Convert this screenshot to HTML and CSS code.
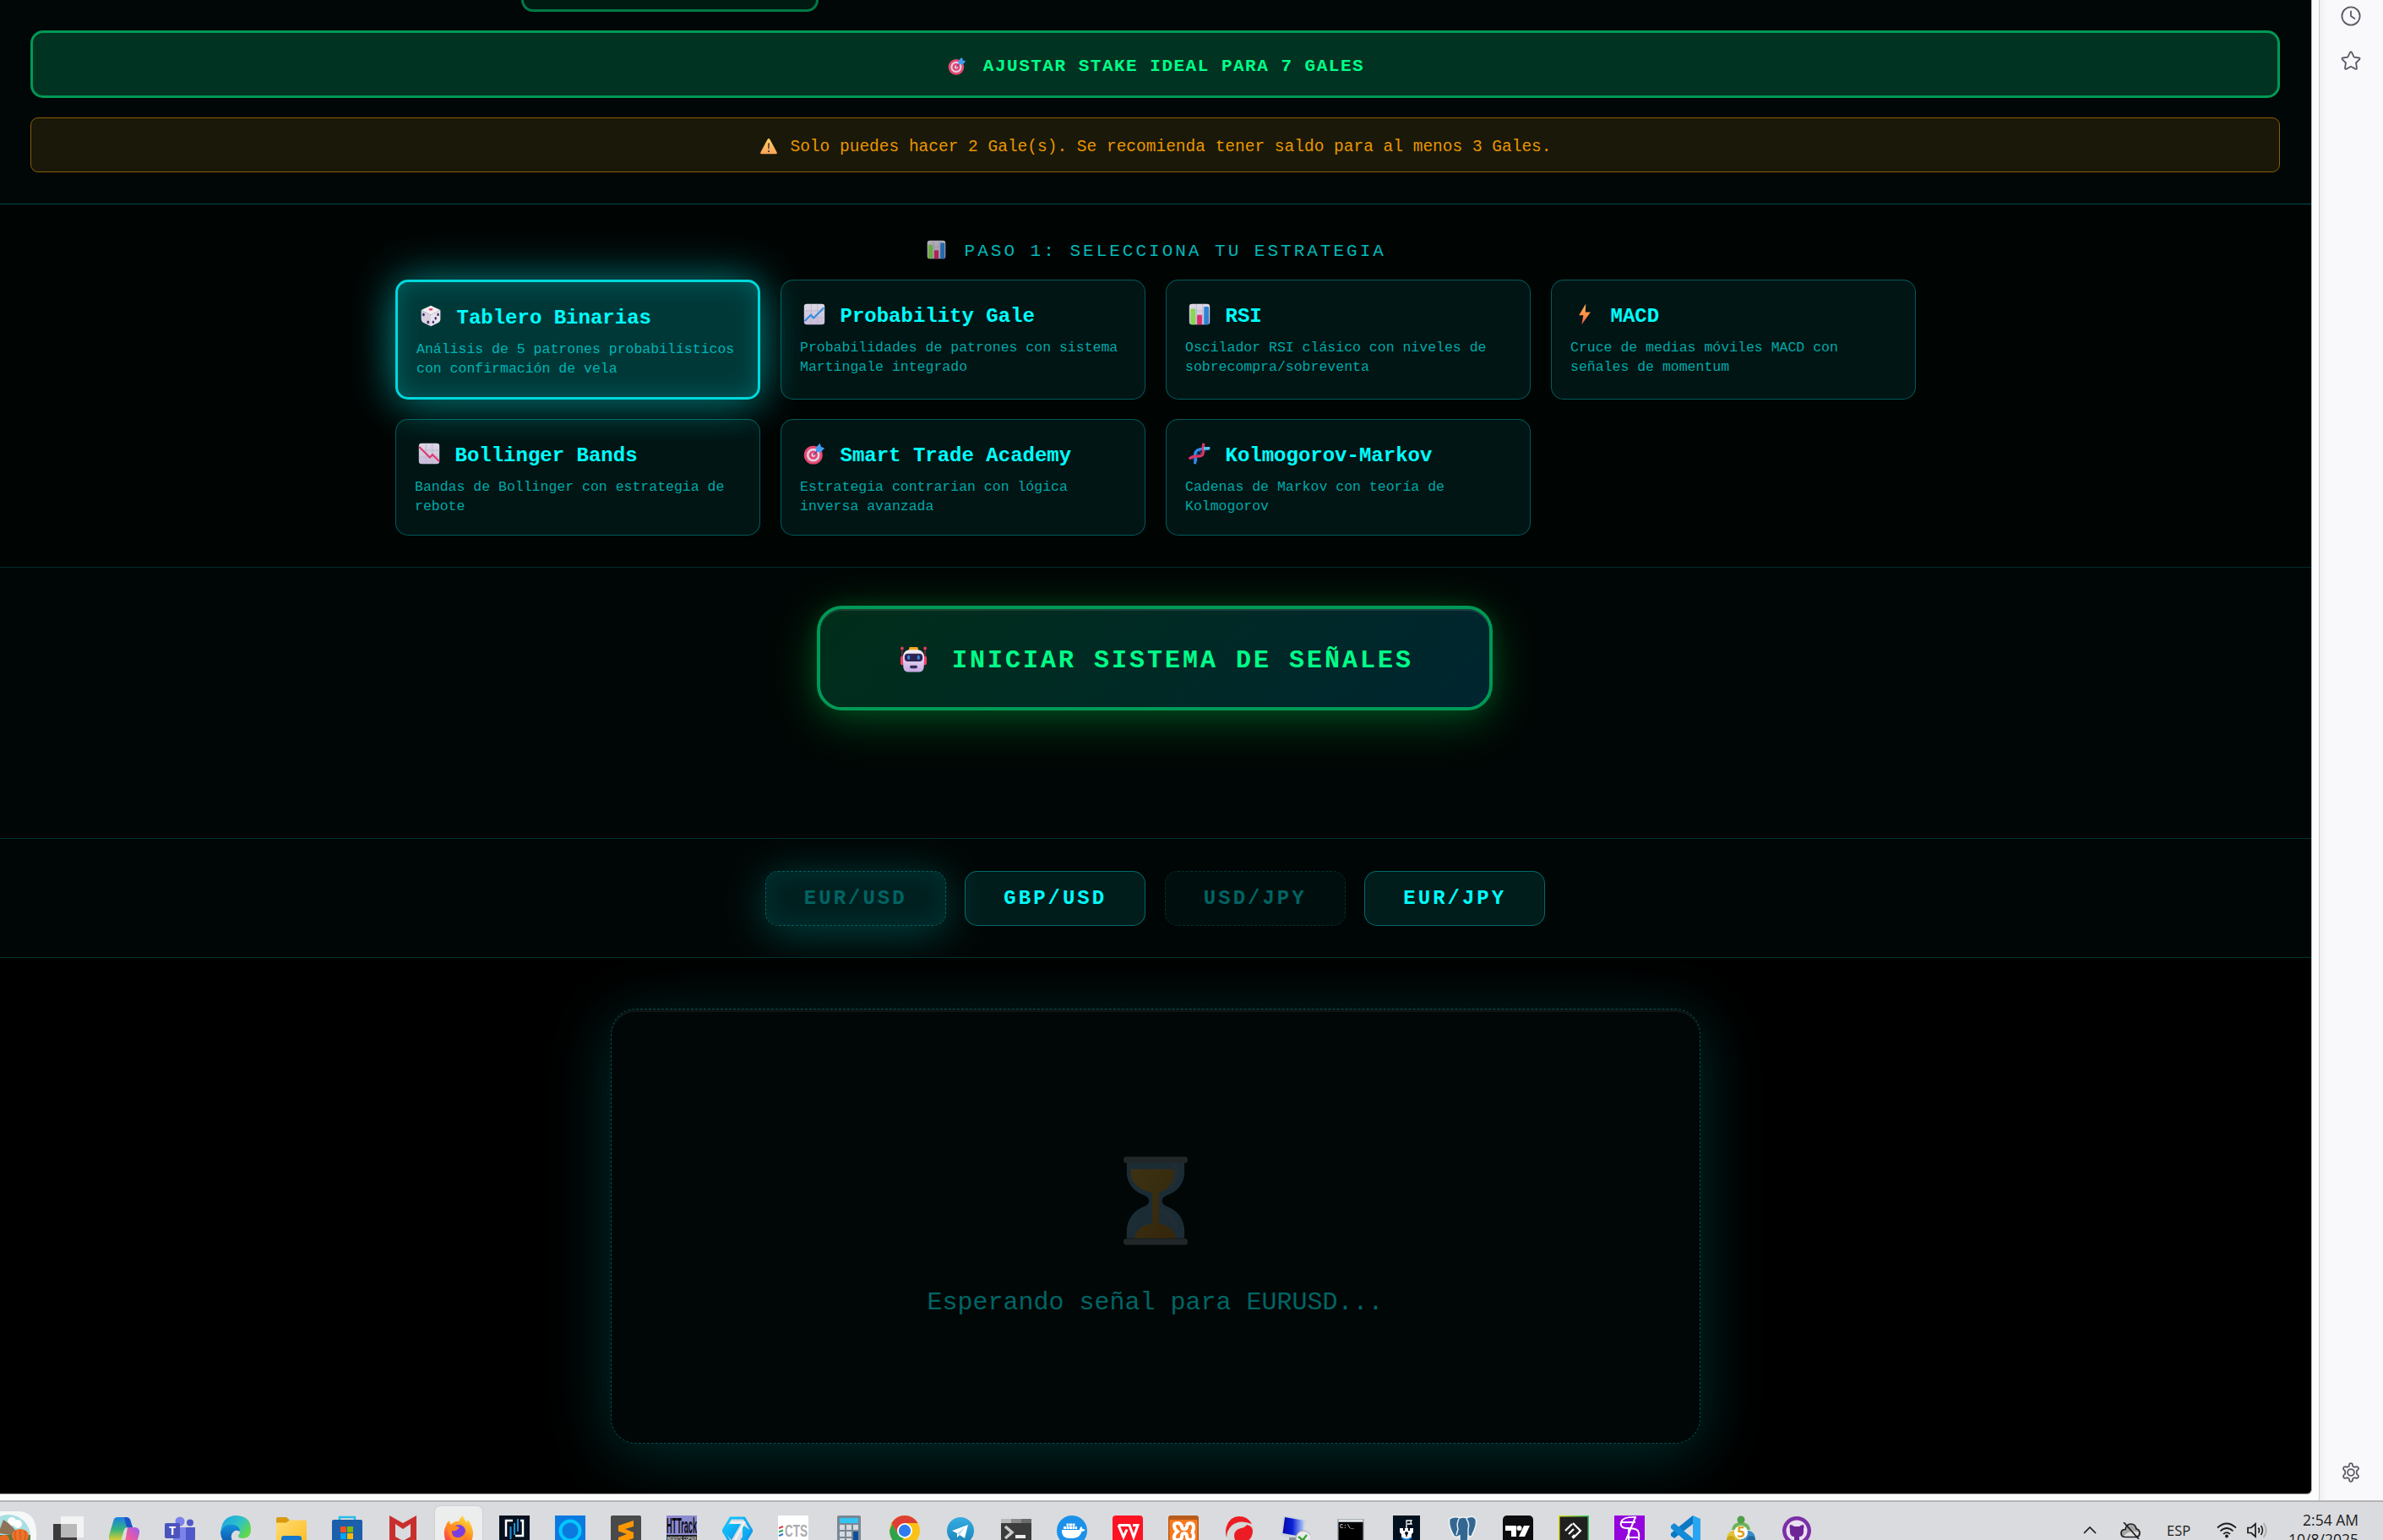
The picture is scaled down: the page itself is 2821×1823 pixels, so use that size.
FILE: index.html
```html
<!DOCTYPE html>
<html lang="es">
<head>
<meta charset="utf-8">
<title>Sistema de Señales</title>
<link rel="stylesheet" href="styles.css">
</head>
<body>
<svg class="defs" aria-hidden="true">
  <defs>
    <linearGradient id="paper" x1="0" y1="0" x2="0" y2="1"><stop offset="0" stop-color="#dcd8e4"/><stop offset="1" stop-color="#c9bddb"/></linearGradient>
    <linearGradient id="bolt" x1="0" y1="0" x2="0" y2="1"><stop offset="0" stop-color="#fcb54a"/><stop offset=".6" stop-color="#ff8a45"/><stop offset="1" stop-color="#f0504a"/></linearGradient>
    <linearGradient id="warn" x1="0" y1="0" x2="0" y2="1"><stop offset="0" stop-color="#ffd058"/><stop offset="1" stop-color="#ffa45c"/></linearGradient>
    <linearGradient id="bot" x1="0" y1="0" x2="0" y2="1"><stop offset="0" stop-color="#f4f0f8"/><stop offset="1" stop-color="#c6a9e4"/></linearGradient>
    <linearGradient id="copA" x1="0" y1="0" x2="0" y2="1"><stop offset="0" stop-color="#1b7fe8"/><stop offset=".5" stop-color="#37b37a"/><stop offset="1" stop-color="#f5d327"/></linearGradient>
    <linearGradient id="copB" x1="1" y1="0" x2="0" y2="1"><stop offset="0" stop-color="#9a5cf5"/><stop offset=".5" stop-color="#ee5b9c"/><stop offset="1" stop-color="#ff9a4a"/></linearGradient>
    <linearGradient id="edgeA" x1="0" y1="0" x2="1" y2=".6"><stop offset="0" stop-color="#1aa0e6"/><stop offset=".6" stop-color="#2fc2c6"/><stop offset="1" stop-color="#62d84a"/></linearGradient>
    <linearGradient id="edgeB" x1="0" y1="0" x2="0" y2="1"><stop offset="0" stop-color="#1490df"/><stop offset="1" stop-color="#0c4a9a"/></linearGradient>
    <linearGradient id="fold" x1="0" y1="0" x2="1" y2="1"><stop offset="0" stop-color="#ffdc72"/><stop offset="1" stop-color="#fbbb20"/></linearGradient>
    <linearGradient id="fox" x1=".8" y1="0" x2=".3" y2="1"><stop offset="0" stop-color="#ffe14a"/><stop offset=".45" stop-color="#ff9a1f"/><stop offset="1" stop-color="#fb2f55"/></linearGradient>
    <linearGradient id="hex" x1="0" y1="0" x2="1" y2="1"><stop offset="0" stop-color="#12c8ff"/><stop offset="1" stop-color="#0f90e8"/></linearGradient>
    <linearGradient id="tg" x1="0" y1="0" x2="0" y2="1"><stop offset="0" stop-color="#35ade1"/><stop offset="1" stop-color="#1b83bd"/></linearGradient>
    <linearGradient id="scr" x1="0" y1="0" x2="1" y2="0"><stop offset="0" stop-color="#0509a8"/><stop offset=".45" stop-color="#0b22d8"/><stop offset="1" stop-color="#b9d2f8"/></linearGradient>
    <linearGradient id="clip" x1="0" y1="0" x2="1" y2="0"><stop offset="0" stop-color="#e3dc22"/><stop offset="1" stop-color="#32c45a"/></linearGradient>
    <linearGradient id="sand" x1="0" y1="0" x2="1" y2="1"><stop offset="0" stop-color="#ffc13a"/><stop offset="1" stop-color="#e58a20"/></linearGradient>
    <symbol id="e-target" viewBox="0 0 32 32">
      <circle cx="14.5" cy="18" r="13.5" fill="#e8486f"/><circle cx="14.5" cy="18" r="9.6" fill="#dccfe6"/><circle cx="14.5" cy="18" r="6.4" fill="#e8406c"/><circle cx="14.5" cy="18" r="3" fill="#dccfe6"/>
      <path d="M14.5 18 24 8.500" stroke="#8c3d78" stroke-width="2"/>
      <path d="M18.500 12.500V7l5.500-6 2 5 5 2-6 6z" fill="#3f9df0"/>
    </symbol>
    <symbol id="e-bars" viewBox="0 0 32 32">
      <rect x="1" y="1" width="30" height="30" rx="4" fill="url(#paper)"/><path d="M11.500 1v30M20.500 1v30M1 11h30M1 21h30" stroke="#bdb5cb" stroke-width="1"/>
      <rect x="3" y="8" width="7" height="23" rx="1.500" fill="#86d84c"/><rect x="12.500" y="17" width="7" height="14" rx="1" fill="#d82f6a"/><rect x="22.500" y="5" width="7" height="26" rx="1.500" fill="#2c84d6"/>
    </symbol>
    <symbol id="e-up" viewBox="0 0 32 32">
      <rect x="1" y="1" width="30" height="30" rx="4" fill="url(#paper)"/><path d="M11.500 1v30M20.500 1v30M1 11h30M1 21h30" stroke="#bdb5cb" stroke-width="1"/>
      <path d="M2 26 11 17l4 4.500L30 6.500" fill="none" stroke="#2f8fe0" stroke-width="2.600"/>
    </symbol>
    <symbol id="e-down" viewBox="0 0 32 32">
      <rect x="1" y="1" width="30" height="30" rx="4" fill="url(#paper)"/><path d="M11.500 1v30M20.500 1v30M1 11h30M1 21h30" stroke="#bdb5cb" stroke-width="1"/>
      <path d="M1.500 6 17 21.500l4-4L30.500 27" fill="none" stroke="#e0356c" stroke-width="2.600"/>
    </symbol>
    <symbol id="e-dice" viewBox="0 0 32 32">
      <path d="M16 1 30 7.500 16 14.500 2 7.500z" fill="#f2eef2"/><path d="M2 7.500 16 14.500V31L4.500 25.500Q2 24 2 21z" fill="#d9d1e0"/><path d="M30 7.500 16 14.500V31l11.500-5.500Q30 24 30 21z" fill="#e9e4ec"/>
      <ellipse cx="16" cy="6.500" rx="3" ry="1.600" fill="#e63c5c"/>
      <g fill="#3a2a74"><ellipse cx="5.500" cy="14" rx="1.600" ry="2.300"/><ellipse cx="12" cy="25" rx="1.600" ry="2.300"/><ellipse cx="26.500" cy="14" rx="1.500" ry="2.200"/><ellipse cx="23" cy="19.500" rx="1.500" ry="2.200"/><ellipse cx="19.500" cy="25" rx="1.500" ry="2.200"/></g>
    </symbol>
    <symbol id="e-bolt" viewBox="0 0 32 32"><path d="M17.500 1 7.500 17.500h6.500L11.500 31 24.500 13h-7.500z" fill="url(#bolt)"/></symbol>
    <symbol id="e-dna" viewBox="0 0 32 32">
      <path d="M9 12l8 8M12 9l10 10M4 21l7 7M22 5l6 6M8 20l5 6M20 8l5 5" stroke="#28508f" stroke-width="1.800"/>
      <path d="M31 8Q22 8 15 10 8 13 10 20 11 26 9 31" fill="none" stroke="#2f8ff0" stroke-width="4"/>
      <path d="M22 1Q21 7 21 11 23 19 15 20 5 19 1 24" fill="none" stroke="#dc3468" stroke-width="4"/>
      <path d="M22 8.500Q27 8 31 8" fill="none" stroke="#58c4f0" stroke-width="4"/>
    </symbol>
    <symbol id="e-warn" viewBox="0 0 32 32"><path d="M16 3Q17.500 3 18.500 5L30 26.500q1 3-2 3H4q-3 0-2-3L13.500 5Q14.500 3 16 3z" fill="url(#warn)"/><path d="M14.600 11h2.800l-.5 10h-1.800z" fill="#4a3a40"/><circle cx="16" cy="25" r="1.600" fill="#4a3a40"/></symbol>
    <symbol id="e-bot" viewBox="0 0 32 32">
      <path d="M2 3v20M30 3v20" stroke="#8c2448" stroke-width="1.600"/><circle cx="2" cy="2.500" r="1.900" fill="#f03a68"/><circle cx="30" cy="2.500" r="1.900" fill="#f03a68"/>
      <rect x="0" y="12" width="6" height="11" rx="2" fill="#f0426e"/><rect x="26" y="12" width="6" height="11" rx="2" fill="#f0426e"/>
      <rect x="10.500" y="1" width="11" height="5" rx="1.500" fill="#f8a820"/>
      <path d="M10 4.500h12q6.500 1 7 9L28.500 26q-1 5.500-6 5.500h-13q-5 0-6-5.500L3 13.500Q3.500 5.500 10 4.500z" fill="url(#bot)"/>
      <rect x="5" y="9" width="22" height="9.500" rx="4" fill="#2e2450"/><rect x="8.500" y="11" width="3" height="5.500" rx="1.500" fill="#2f86e8"/><rect x="20.500" y="11" width="3" height="5.500" rx="1.500" fill="#2f86e8"/>
      <rect x="11.500" y="23.500" width="9" height="3.500" rx="1.500" fill="#3a2c58"/>
    </symbol>
  </defs>
</svg>

<div class="window">
  <main class="page">
    <section class="stake">
      <div class="stake-tile"></div>
      <button class="adjust"><svg class="emoji"><use href="#e-target"/></svg><span>AJUSTAR STAKE IDEAL PARA 7 GALES</span></button>
      <div class="notice"><svg class="emoji"><use href="#e-warn"/></svg><span>Solo puedes hacer 2 Gale(s). Se recomienda tener saldo para al menos 3 Gales.</span></div>
    </section>

    <section class="strategies">
      <h2 class="step"><svg class="emoji"><use href="#e-bars"/></svg><span>PASO 1: SELECCIONA TU ESTRATEGIA</span></h2>
      <div class="grid">
        <article class="card selected"><h3><svg class="emoji"><use href="#e-dice"/></svg><span>Tablero Binarias</span></h3><p>Análisis de 5 patrones probabilísticos con confirmación de vela</p></article>
        <article class="card"><h3><svg class="emoji"><use href="#e-up"/></svg><span>Probability Gale</span></h3><p>Probabilidades de patrones con sistema Martingale integrado</p></article>
        <article class="card"><h3><svg class="emoji"><use href="#e-bars"/></svg><span>RSI</span></h3><p>Oscilador RSI clásico con niveles de sobrecompra/sobreventa</p></article>
        <article class="card"><h3><svg class="emoji"><use href="#e-bolt"/></svg><span>MACD</span></h3><p>Cruce de medias móviles MACD con señales de momentum</p></article>
        <article class="card"><h3><svg class="emoji"><use href="#e-down"/></svg><span>Bollinger Bands</span></h3><p>Bandas de Bollinger con estrategia de rebote</p></article>
        <article class="card"><h3><svg class="emoji"><use href="#e-target"/></svg><span>Smart Trade Academy</span></h3><p>Estrategia contrarian con lógica inversa avanzada</p></article>
        <article class="card"><h3><svg class="emoji"><use href="#e-dna"/></svg><span>Kolmogorov-Markov</span></h3><p>Cadenas de Markov con teoría de Kolmogorov</p></article>
      </div>
    </section>

    <section class="launch">
      <button class="start"><svg class="emoji"><use href="#e-bot"/></svg><span>INICIAR SISTEMA DE SEÑALES</span></button>
    </section>

    <section class="pairs">
      <button class="pair current closed">EUR/USD</button>
      <button class="pair">GBP/USD</button>
      <button class="pair closed">USD/JPY</button>
      <button class="pair">EUR/JPY</button>
    </section>

    <section class="board">
      <div class="signal">
        <svg class="hourglass" viewBox="0 0 78 107">
          <path d="M4 6h70v16Q71 41 52 47q-5 2-5 6.500t5 6.500q19 7 22 27v12H4V87Q7 67 26 60q5-2 5-6.500T26 47Q7 41 4 22z" fill="#78a9d2"/>
          <path d="M9 15h52v8Q59 38 43 44v37q18 3 21 18H13Q16 84 35 81V44Q11 38 9 22z" fill="url(#sand)"/>
          <path d="M62 11q5 13-4 25M46 66q13 7 18 18" fill="none" stroke="#a8b0c4" stroke-width="5" stroke-linecap="round" opacity=".6"/>
          <rect width="78" height="7.500" rx="3.500" fill="#90939a"/><rect y="99.500" width="78" height="7.500" rx="3.500" fill="#90939a"/>
        </svg>
        <p>Esperando señal para EURUSD...</p>
      </div>
    </section>
  </main>

  <aside class="sidebar">
    <svg class="side-icon clock" viewBox="0 0 24 24"><circle cx="12" cy="12" r="10.600"/><path d="M12 6.500V12l4.500 3"/></svg>
    <svg class="side-icon star" viewBox="0 0 24 24"><path d="M12 1.500q.8 0 1.200.9l2.500 5.300 5.700.8q1.900.4.700 1.900l-4.100 4.100 1 5.900q.2 1.900-1.600 1.200L12 18.800l-5.400 2.800q-1.800.7-1.600-1.200l1-5.900-4.100-4.100Q.7 8.900 2.600 8.500l5.700-.8 2.500-5.300q.4-.9 1.200-.9z"/></svg>
    <svg class="side-icon gear" viewBox="0 0 24 24"><circle cx="12" cy="12" r="3.900"/><path d="M10 3.200q.3-2 2-2t2 2l.3 1.500 1.900 1.100 1.600-.5q2-.6 2.900 1t-.6 2.800l-1.300 1.100v3.600l1.300 1.100q1.500 1.200.6 2.800t-2.900 1l-1.600-.5-1.900 1.100-.3 1.500q-.3 2-2 2t-2-2l-.3-1.500-1.900-1.100-1.600.5q-2 .6-2.900-1t.6-2.800l1.300-1.100v-3.600L3.900 9.100q-1.500-1.200-.6-2.800t2.900-1l1.600.5 1.900-1.100z"/></svg>
  </aside>
</div>

<footer class="taskbar">
  <div class="widget"><svg viewBox="0 0 46 40" width="46" height="40">
    <path d="M-14 0H23q20 2 20 26v20H-14z" fill="#f6f7f7"/><clipPath id="wc"><circle cx="10" cy="30" r="26"/></clipPath>
    <g clip-path="url(#wc)"><rect x="-14" y="4" width="60" height="40" fill="#a7dfe2"/><circle cx="14" cy="12" r="5" fill="#fff"/><circle cx="21" cy="15" r="5" fill="#fff"/><path d="M-2 26 4 10l6 4 16 16z" fill="#8d7358"/><path d="M-10 28h50v20h-50z" fill="#587a3c"/><ellipse cx="24" cy="29" rx="10" ry="8" fill="#f0732a"/><ellipse cx="5" cy="33" rx="6" ry="5" fill="#e86a22"/><path d="M24 22v13M19 23q-3 5 0 11M29 23q3 5 0 11" stroke="#c9501c" fill="none"/></g></svg></div>
  <nav class="apps">
    <svg viewBox="0 0 36 36"><rect y="10" width="28" height="26" fill="#3c3a3a"/><rect x="9" y="1" width="27" height="25" fill="#f4f4f4" opacity=".95"/><rect x="9" y="10" width="19" height="16" fill="#b9b9ba"/></svg>
    <svg viewBox="0 0 36 36"><path d="M10 2h10q5 0 6 6l2 6h-6q-4 0-5 6l-3 11H5q-6 0-5-7L5 7q1-5 5-5z" fill="url(#copA)"/><path d="M18 2h3q4 0 5 6l2 6h-7l-2-7z" fill="#1b54c8"/><path d="M22 14h9q6 1 5 7l-5 18H12l4-8q3 0 4-5z" fill="url(#copB)"/></svg>
    <svg viewBox="0 0 36 36"><circle cx="18" cy="7" r="5.500" fill="#7b83eb"/><circle cx="30" cy="8.500" r="4" fill="#5059c9"/><path d="M24 14h12v14q-2 6-12 5z" fill="#5059c9"/><path d="M10 14h15v22H10z" fill="#7b83eb"/><rect y="9" width="18" height="18" rx="2" fill="#4b53bc"/><text x="9" y="23" text-anchor="middle" class="ico-teams">T</text></svg>
    <svg viewBox="0 0 36 36"><path d="M0 22Q1 0 19 0q17 1 17 16 0 11-10 11-5 0-5-3 2-2 2-5-1-6-8-6Q4 13 0 22z" fill="url(#edgeA)"/><path d="M0 20Q4 9 15 11q8 1 8 8-3-2-6-1-5 3-4 9t12 6l7-1Q26 39 17 38 1 35 0 20z" fill="url(#edgeB)"/></svg>
    <svg viewBox="0 0 36 36"><path d="M0 4q0-2 2-2h10l4 3.500-4 3.500H0z" fill="#d99a10"/><path d="M0 8.500h12l4-3h18q2 0 2 2v30H0z" fill="url(#fold)"/><path d="M6 38V27q0-3 3-3h18q3 0 3 3v11z" fill="#1678cc"/></svg>
    <svg viewBox="0 0 36 36"><path d="M9 8V2h18v6" fill="none" stroke="#27bdea" stroke-width="2.500"/><rect y="5" width="36" height="34" rx="2" fill="#1c5faa"/><path d="M10 13h7v7h-7z" fill="#f25022"/><path d="M18 13h7v7h-7z" fill="#7fba00"/><path d="M10 21h7v7h-7z" fill="#00a4ef"/><path d="M18 21h7v7h-7z" fill="#ffb900"/></svg>
    <svg viewBox="0 0 36 36"><path d="M2 0 18 9 34 0v32l-16 6L2 32z" fill="#c8302e"/><path d="M9 10 18 16 27 10v15l-9 5-9-5z" fill="#d9dbde"/></svg>
    <svg class="active" viewBox="0 0 36 36"><path d="M3 12q1-4 4-6 0 3 2 5 4-5 9-4Q19 3 23 0q1 5 5 8 0-2 1-3 6 8 6 17-1 16-17 16T1 23q-1-6 2-11z" fill="url(#fox)"/><circle cx="18" cy="19" r="8" fill="#7a3ee0"/><path d="M5 10q8 1 14 4-3 5-9 4-2 6 5 8 8 1 11-7 1 11-8 13Q5 32 5 10z" fill="#ff8a1f"/></svg>
    <svg viewBox="0 0 36 36"><rect width="36" height="36" fill="#07111f"/><path d="M16 6H8v19M19 24h9V6h-3" fill="none" stroke="#fff" stroke-width="2.500"/><path d="M13.500 13v15M18 9v14M22 4v15" stroke="#1e8fd8" stroke-width="2"/></svg>
    <svg viewBox="0 0 36 36"><rect width="36" height="36" fill="#0a7ae0"/><circle cx="18" cy="18" r="11.500" fill="none" stroke="#05c6ff" stroke-width="4"/></svg>
    <svg viewBox="0 0 36 36"><rect width="36" height="40" rx="2" fill="#4a4a4a"/><path d="M27 6v7l-10 3 10 4v7L9 33v-7l10-4-10-3.500V12z" fill="#ff9800"/></svg>
    <svg viewBox="0 0 36 36"><rect width="36" height="36" fill="#8c8bd0"/><rect y="23" width="36" height="13" fill="#1c1c1c"/><text x="18" y="21" text-anchor="middle" textLength="36" lengthAdjust="spacingAndGlyphs" class="ico-track">HTTrack</text><text x="18" y="28.500" text-anchor="middle" textLength="35" lengthAdjust="spacingAndGlyphs" class="ico-track-sub">WEBSITE COPIER</text></svg>
    <svg viewBox="0 0 36 36"><path d="M10 3h16l9 15-9 15H10L1 18z" fill="none" stroke="url(#hex)" stroke-width="3"/><path d="M8 10h14L11 29 1 18z" fill="url(#hex)"/><path d="M24 11l10 7-8 15h-7l5-8z" fill="url(#hex)"/><path d="M10 8.500h16L14 31" fill="none" stroke="#eef3f7" stroke-width="2.500"/></svg>
    <svg viewBox="0 0 36 36"><rect width="36" height="36" fill="#fff"/><path d="M1 15l5-2" stroke="#e03a4a" stroke-width="2"/><path d="M1 19.500l5-2" stroke="#2ea860" stroke-width="2"/><path d="M1 24l5-2" stroke="#2f78d0" stroke-width="2"/><text x="8" y="25" textLength="27" lengthAdjust="spacingAndGlyphs" class="ico-cts">CTS</text></svg>
    <svg viewBox="0 0 36 36"><rect x="4" width="28" height="40" rx="2" fill="#7a8794"/><rect x="7" y="3" width="22" height="6" rx="1" fill="#35c4f2"/><path d="M7 11h6v6H7zM15 11h6v6h-6zM23 11h6v6h-6zM7 19h6v6H7zM15 19h6v6h-6zM7 27h6v6H7zM15 27h6v6h-6z" fill="#d5dade"/><path d="M23 19h6v14h-6z" fill="#0e4f9c"/></svg>
    <svg viewBox="0 0 36 36"><circle cx="18" cy="18" r="18" fill="#fbc116"/><path d="M2.400 9Q8 0 18 0t15.600 9H18z" fill="#dd4032"/><path d="M2.400 9 10 22l8-13z" fill="#dd4032"/><path d="M18 26l-8.500 8Q1 30 0 18L3 10l7 12z" fill="#2fa24c"/><circle cx="18" cy="18" r="9" fill="#fff"/><circle cx="18" cy="18" r="7.200" fill="#2f7cf0"/></svg>
    <svg viewBox="0 0 36 36"><circle cx="18" cy="18" r="16" fill="url(#tg)"/><path d="M8 18 27 11l-4 16-6-4-3 3v-5z" fill="#fff"/><path d="m14 21 9-7-6 9z" fill="#bcdcf0"/></svg>
    <svg viewBox="0 0 36 36"><rect y="4" width="36" height="34" fill="#3c3c3c"/><path d="M0 4h12v5H0z" fill="#b9b9b9"/><path d="M12 4h12v5H12z" fill="#8b8b8b"/><path d="M24 4h12v5H24z" fill="#6b6b6b"/><path d="M5 13l8 7-8 7" fill="none" stroke="#ccc" stroke-width="3.500"/><rect x="17" y="23" width="12" height="4" fill="#ececec"/></svg>
    <svg viewBox="0 0 36 36"><circle cx="18" cy="18" r="18" fill="#1d91ea"/><path d="M6 17h21q0-3 2-4 1 1 1.500 3 2 0 3 1-1 2-4 2-2 8-12 8Q5 28 6 17z" fill="#fff"/><path d="M8 13h3v3H8zM11.500 13h3v3h-3zM15 13h3v3h-3zM18.500 13h3v3h-3zM22 13h2v3h-2zM11.500 9.500h3v3h-3zM15 9.500h3v3h-3zM18.500 9.500h3v3h-3z" fill="#fff"/></svg>
    <svg viewBox="0 0 36 36"><rect width="36" height="40" rx="4" fill="#fd1322"/><path d="M7 11.500h13l5 14 5-14h-6M7 11.500l6 14 4-9" fill="none" stroke="#fff" stroke-width="3"/></svg>
    <svg viewBox="0 0 36 36"><rect width="36" height="40" rx="3" fill="#b85c1c"/><rect x="1.500" y="5" width="33" height="34" fill="#f87a20"/><path d="M7 12q0-3 4-3t5 4q0 3 3 3t3-3q0-4 4-4t4 5-3 5q3 1 3 6 0 4-4 4t-4-4-3-4-3 4-5 4-4-4q0-3 4-6-4-3-4-7z" fill="none" stroke="#fff" stroke-width="4"/></svg>
    <svg viewBox="0 0 36 36"><circle cx="18" cy="18" r="17" fill="#d6d8d8"/><path d="M3 13Q7 1 18 1q10 0 15 9-15-6-24 2-6 6-6 14-2-7 0-13z" fill="#ec1c24"/><path d="M27 11q7 1 7 8-1 12-13 13-9 0-9-8 0-7 8-9 5-1 7-4z" fill="#ec1c24"/></svg>
    <svg viewBox="0 0 36 36"><path d="M4 0l27 5-3 24-27-5z" fill="#ced3da"/><path d="M6 2l23 4-2.500 19-23-4z" fill="url(#scr)"/><path d="M11 26h8l1 5h-9z" fill="#8a929a"/><path d="M5 31h20v5H5z" fill="#cfd3d8"/><circle cx="28" cy="27" r="9" fill="#e9ebec" stroke="#a3a8ac"/><path d="M22 25l4 3-3 4M32 23l-4 5 3 4" fill="none" stroke="#37a02c" stroke-width="2.200"/></svg>
    <svg viewBox="0 0 36 36"><rect x="2" y="4" width="32" height="36" fill="#a9b0b6"/><rect x="3.500" y="8" width="29" height="30" fill="#000"/><path d="M4 5h28v2H4z" fill="#dfe3e6"/><text x="5" y="14.500" class="ico-cmd">C:\_</text></svg>
    <svg viewBox="0 0 36 36"><rect x="2" width="32" height="36" fill="#03101e"/><path d="M10 15h4v3h2v-3h4v3h2v-3h4v5l-2 2v4q-2 2-6 2-4 0-6-2v-4l-2-2z" fill="#fff"/><path d="M18 15V6h6l-1 2 1 2h-5" fill="none" stroke="#fff" stroke-width="1.300"/><circle cx="18" cy="21" r="2" fill="#03101e"/><path d="M17.300 21h1.400v4h-1.400z" fill="#03101e"/><path d="M12 26q6 5 12 0" fill="none" stroke="#1a84e0" stroke-width="2"/></svg>
    <svg viewBox="0 0 36 36"><path d="M3 4q6-4 12-1 4-2 8 0 7-4 11 1 2 7-4 18 0 4-5 2l-1 14h-9V24q-5 3-7 0Q1 12 3 4z" fill="#336791" stroke="#eef3f7" stroke-width="1.500"/><path d="M14 4q-3 6-1 12l-2 7M23 4q4 6 2 12v8" fill="none" stroke="#e6eef4" stroke-width="1.500"/></svg>
    <svg viewBox="0 0 36 36"><rect width="36" height="40" rx="5" fill="#0d0d0f"/><path d="M3 12h13v13h-6v-7H3z" fill="#fff"/><circle cx="19.500" cy="15" r="3" fill="#fff"/><path d="M25 12h7l-6 13h-7z" fill="#fff"/></svg>
    <svg viewBox="0 0 36 36"><rect width="36" height="40" fill="url(#clip)"/><rect x="1.500" y="1.500" width="33" height="38" fill="#202020"/><path d="M17 9l9 9-9 9M8 18l8-8M12 22l6-6M16 26l3-3" fill="none" stroke="#fff" stroke-width="2.200"/></svg>
    <svg viewBox="0 0 36 36"><rect width="36" height="36" fill="#9404dc"/><path d="M26 2Q10 1 8 8t8 7q9 0 12 3 3 6-1 18M25 2 11 36M8 8h17M17 16v20M14 26h14" fill="none" stroke="#fff" stroke-width="2"/></svg>
    <svg viewBox="0 0 36 36"><path d="M27 0l9 4v30l-9 4z" fill="#2aa5f2"/><path d="M27 0v10L5 27l-4-3v-3z" fill="#0b79c4"/><path d="M27 38V27L5 9l-4 3v3z" fill="#138bd6"/></svg>
    <svg viewBox="0 0 36 36"><path d="M7 17q1-9 11-9t11 9z" fill="#6bb456"/><circle cx="18" cy="5" r="4.500" fill="#4f9e48"/><path d="M1 29q0-9 7-11h10v11z" fill="#e0c436"/><circle cx="6" cy="29" r="5" fill="#c9a41c"/><path d="M35 29q0-9-7-11H18v11z" fill="#3a8cc8"/><circle cx="30" cy="29" r="5" fill="#23699f"/><circle cx="18" cy="20" r="8" fill="#fff"/><text x="18" y="26" text-anchor="middle" class="ico-five">5</text></svg>
    <svg viewBox="0 0 36 36"><circle cx="18" cy="18" r="17" fill="#7c2fa8"/><circle cx="18" cy="18" r="12.500" fill="#e9e0f0"/><path d="M10 11q3 0 5 2h6q2-2 5-2 1 3 0 5 1 9-5 9v8h-6v-8q-6 0-5-9-1-2 0-5z" fill="#6d2596"/></svg>
  </nav>
  <div class="tray">
    <svg class="chev" viewBox="0 0 16 10"><path d="M1 9l7-7 7 7"/></svg>
    <svg class="cloud" viewBox="0 0 24 20"><path d="M6 17.500q-5 0-5-4.500t5-4.500Q7 2 12.500 2T19 8q4 .5 4 5t-5 4.500z" fill="#a5a5a5"/><path d="M4 16q8-8 18-4-1 4.500-5 4.500H6z" fill="#dedede" stroke="none"/><path d="M4 0l18 20"/></svg>
    <span class="lang">ESP</span>
    <svg class="wifi" viewBox="0 0 24 19"><path d="M1 6.500q11-10 22 0M4.500 10.500q7.500-7 15 0M8 14q4-4 8 0"/><circle cx="12" cy="16.500" r="2" class="dot"/></svg>
    <svg class="vol" viewBox="0 0 24 19"><path d="M1 6.500h4l5-4.500v15l-5-4.500H1zM13.500 6.500q2 3 0 6M16.500 4q4 5.500 0 11"/><path d="M19.500 1q6.500 8.500 0 17" class="faint"/></svg>
    <div class="clock-text"><span>2:54 AM</span><span>10/8/2025</span></div>
  </div>
</footer>
</body>
</html>
```
FILE: styles.css
```css
* { box-sizing: border-box; }
html, body { margin: 0; height: 100%; overflow: hidden; }
body {
  display: flex;
  flex-direction: column;
  background: #fcfcfd;
  font-family: "Courier New", "Liberation Mono", monospace;
}
button { font: inherit; margin: 0; }
h2, h3, p { margin: 0; }
.defs { position: absolute; width: 0; height: 0; }
.emoji { flex: none; display: block; }

.window {
  flex: none;
  display: flex;
  justify-content: space-between;
  height: 1778px;
  border-bottom: 2px solid #b4b5b6;
}
.page {
  display: flex;
  flex-direction: column;
  width: 2737px;
  height: 1769px;
  background: #000;
  border-right: 1px solid #b8b9bb;
  border-bottom: 1px solid #a8a9aa;
  border-bottom-right-radius: 6px;
  overflow: hidden;
}
.page > section { flex: none; }

.stake {
  display: flex;
  flex-direction: column;
  height: 242px;
  padding: 0 37px 0 36px;
  background: #000706;
  border-bottom: 1px solid #004a4a;
}
.stake-tile {
  width: 352px;
  height: 14px;
  margin-left: 581px;
  background: #001a12;
  border: 3px solid #007a45;
  border-top: 0;
  border-radius: 0 0 15px 15px;
}
.adjust, .notice {
  display: flex;
  align-items: center;
  justify-content: center;
}
.adjust {
  height: 80px;
  margin-top: 22px;
  padding: 5px 0 0 2px;
  color: #00ff88;
  background: #003322;
  border: 3px solid #009955;
  border-radius: 15px;
  font-size: 21px;
  font-weight: bold;
  letter-spacing: 1.5px;
}
.adjust .emoji { width: 22px; height: 22px; margin-right: 20px; margin-top: -1px; }
.notice {
  height: 65px;
  margin-top: 23px;
  padding: 4px 0 0 1px;
  color: #e89600;
  background: #1a1808;
  border: 1px solid #8a5c08;
  border-radius: 9px;
  font-size: 19.5px;
}
.notice .emoji { width: 22px; height: 22px; margin-right: 14px; margin-top: -1px; }

.strategies {
  height: 430px;
  padding-top: 42px;
  background: #000504;
  border-bottom: 1px solid #002c2c;
}
.step {
  display: flex;
  align-items: center;
  justify-content: center;
  height: 24px;
  margin-bottom: 23px;
  padding: 2px 0 0 2px;
  color: #00b8b8;
  font-size: 21px;
  font-weight: normal;
  letter-spacing: 3px;
}
.step .emoji { width: 23px; height: 23px; margin: -3px 21.500px 0 0; opacity: .8; }
.grid {
  display: grid;
  grid-template-columns: repeat(4, 432px);
  justify-content: center;
  gap: 23.5px 24px;
  padding-right: 1px;
}
.card {
  padding: 23.5px 22.5px 21.5px;
  background: rgba(0, 255, 255, .065);
  border: 1px solid rgba(0, 255, 255, .3);
  border-radius: 15px;
}
.card h3 {
  display: flex;
  align-items: center;
  height: 38px;
  margin-bottom: 6.500px;
  color: #00ffff;
  font-size: 24px;
}
.card .emoji { width: 26px; height: 26px; margin: -5px 18px 0 3.500px; }
.card p { color: #00a8a8; font-size: 16.5px; line-height: 23.100px; }
.card.selected {
  background: #003838;
  border: 3px solid #00d8dc;
  box-shadow: 0 0 54px rgba(0, 255, 255, .4), 0 8px 48px rgba(0, 255, 255, .18), inset 0 0 30px rgba(0, 255, 255, .2);
}
.card.selected p { color: #00b4b4; }

.launch {
  display: flex;
  justify-content: center;
  align-items: flex-start;
  height: 321px;
  padding-top: 45px;
  background: #000605;
  border-bottom: 1px solid #003333;
}
.start {
  display: flex;
  align-items: center;
  justify-content: center;
  width: 800px;
  height: 124px;
  margin-right: 2px;
  padding: 6px 0 0 5px;
  color: #00ff88;
  background: linear-gradient(135deg, #002e1a, #002530) padding-box;
  border: 4px solid #009957;
  border-radius: 30px;
  box-shadow: 0 12px 54px rgba(0, 255, 100, .27), 0 0 24px rgba(0, 255, 100, .1), inset 0 2px 0 rgba(255, 255, 255, .1);
  font-size: 30px;
  font-weight: bold;
  letter-spacing: 3px;
}
.start .emoji { width: 31px; height: 31px; margin: -3px 30px 0 0; }

.pairs {
  display: flex;
  justify-content: center;
  gap: 22.5px;
  height: 141px;
  padding: 38px 1px 0 0;
  background: #000605;
  border-bottom: 1px solid #003333;
  overflow: hidden;
}
.pair {
  width: 214px;
  height: 65px;
  padding: 0;
  color: #00ffff;
  background: rgba(0, 255, 255, .09);
  border: 1px solid rgba(0, 255, 255, .35);
  border-radius: 15px;
  font-size: 24px;
  font-weight: bold;
  letter-spacing: 3px;
}
.pair.closed {
  color: #006464;
  background: rgba(0, 255, 255, .035);
  border: 1px dashed rgba(0, 255, 255, .15);
}
.pair.current {
  background: #002020;
  border-color: #006060;
  box-shadow: 0 8px 54px rgba(0, 255, 255, .25), inset 0 0 30px rgba(0, 255, 255, .08);
}

.board { padding: 60px 1px 0 0; }
.signal {
  display: flex;
  flex-direction: column;
  align-items: center;
  width: 1290px;
  height: 515px;
  margin: 0 auto;
  padding-top: 173px;
  background: #000706;
  border: 1px dashed #005050;
  border-radius: 30px;
  box-shadow: 0 12px 76px rgba(0, 255, 255, .18), inset 0 3px 0 rgba(255, 255, 255, .055);
}
.hourglass { width: 76px; height: 107px; opacity: .23; }
.signal p { margin-top: 50px; color: #006565; font-size: 30px; line-height: 34px; }

.sidebar {
  display: flex;
  flex-direction: column;
  align-items: center;
  width: 76px;
  height: 1776px;
  padding-right: 2px;
  background: linear-gradient(90deg, #efeff1, #f9f9fb 8px);
  border-left: 1px solid #cbcbce;
}
.side-icon { flex: none; width: 24px; height: 24px; fill: none; stroke: #5b5b66; stroke-width: 1.8; stroke-linejoin: round; stroke-linecap: round; }
.clock { margin-top: 7px; }
.star { margin-top: 29px; }
.gear { margin: auto 0 21px; }

.taskbar {
  flex: 1;
  display: flex;
  min-height: 0;
  background: #dadbde;
  overflow: hidden;
  font-family: "Segoe UI", "Open Sans", "Noto Sans", sans-serif;
}
.widget { width: 48px; padding-top: 11px; }
.widget svg { display: block; }
.apps { display: flex; }
.apps svg { width: 66px; height: 52px; padding: 16px 15px 0; }
.apps svg.active {
  width: 56px;
  height: 60px;
  margin: 5px 5px 0;
  padding: 11px 10px 13px;
  background: #eceded;
  border-radius: 6px;
  box-shadow: 0 0 2px #bbb;
}
.ico-teams { font: bold 14px "Open Sans", sans-serif; fill: #fff; }
.ico-track { font: bold 26px "Liberation Sans", sans-serif; fill: #080810; }
.ico-track-sub { font: bold 6px "Liberation Sans", sans-serif; fill: #ddd; }
.ico-cts { font: bold 21px "Liberation Sans", sans-serif; fill: #a9acaf; }
.ico-cmd { font: 7px "Liberation Mono", monospace; fill: #fff; }
.ico-five { font: bold 17px "Open Sans", sans-serif; fill: #e0a020; }

.tray {
  display: flex;
  align-items: flex-start;
  margin-left: auto;
  padding-right: 29px;
  color: #1c1c1c;
  font-size: 17px;
}
.tray svg { flex: none; fill: none; stroke: #1c1c1c; stroke-width: 1.7; }
.tray .dot { fill: #1c1c1c; stroke: none; }
.tray .faint { stroke: #ababab; }
.chev { width: 16px; height: 10px; margin: 28px 28px 0 0; }
.cloud { width: 24px; height: 20px; margin: 24px 31px 0 0; }
.lang { width: 28px; margin: 22px 31px 0 0; line-height: 24px; font-size: 16.500px; }
.wifi { width: 24px; height: 19px; margin: 24px 12px 0 0; }
.vol { width: 24px; height: 19px; margin-top: 24px; }
.clock-text { display: flex; flex-direction: column; align-items: flex-end; width: 108px; padding-top: 10px; line-height: 23px; font-size: 17.5px; }
```
